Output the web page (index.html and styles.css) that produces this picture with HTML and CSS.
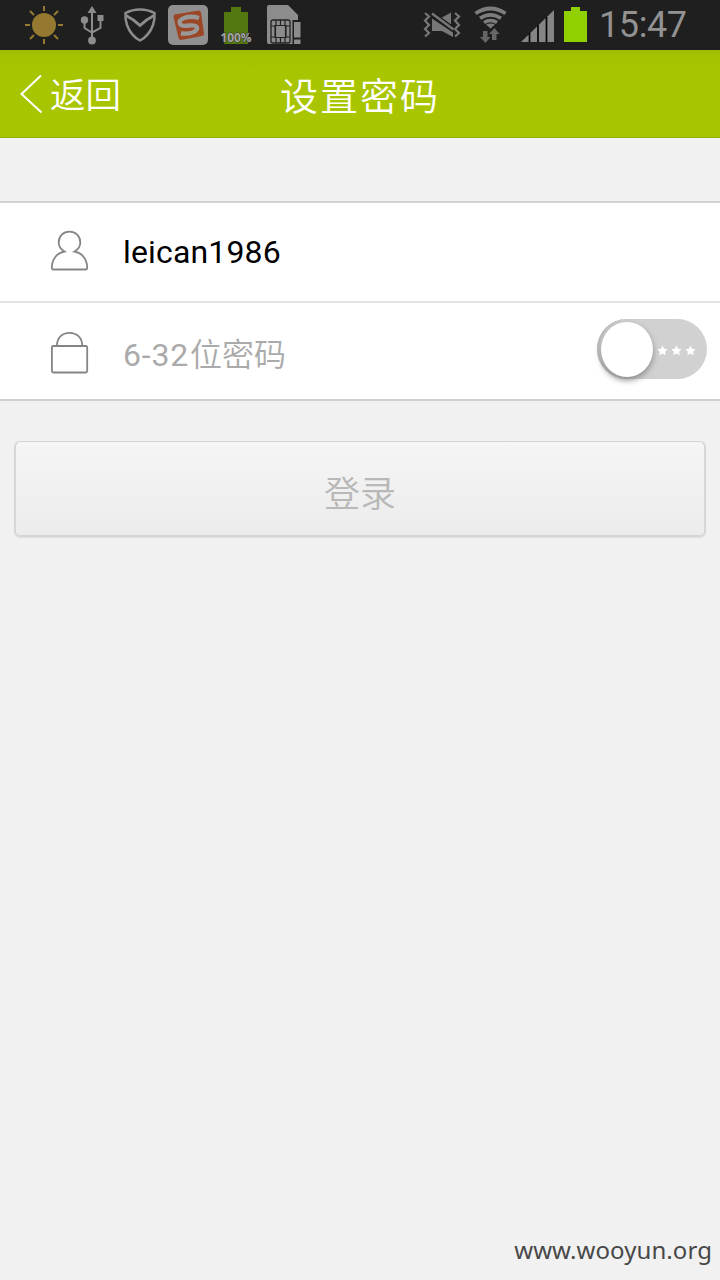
FILE: index.html
```html
<!DOCTYPE html>
<html lang="zh-CN">
<head>
<meta charset="utf-8">
<title>设置密码</title>
<link rel="stylesheet" href="styles.css">
</head>
<body>
<div class="screen">
  <div class="status-bar">
    <div class="notifications">
      <svg width="40" height="50" viewBox="24 0 40 50"><circle cx="44" cy="25" r="12" fill="#957931"/><path d="M44 6v5M44 39v5M25 25h5M58 25h5M30 11l4 4M54 35l4 4M58 11l-4 4M34 35l-4 4" stroke="#957931" stroke-width="2"/></svg>
      <svg width="26" height="50" viewBox="80 0 26 50" fill="#8c8c8c"><path d="M92 6l4.500 7h-9zM97.500 15h6v6h-6z"/><circle cx="84.500" cy="20" r="3.700"/><circle cx="92" cy="40.500" r="3.900"/><path d="M92 11v28M84.500 22v6l7.500 4.500 8.500-4.500v-9" fill="none" stroke="#8c8c8c" stroke-width="2"/></svg>
      <svg width="36" height="50" viewBox="122 0 36 50" fill="none" stroke="#8c8c8c"><path d="M140 9.500q8 0 14.500 3.500.5 6-1.500 12-4 11-13 15.500-9-4.500-13-15.500-2-6-1.500-12 6.500-3.500 14.500-3.500z" stroke-width="2.500"/><path d="M126 15.500q7 3.500 14 10 7-6.500 14-10" stroke-width="3"/></svg>
      <svg width="40" height="50" viewBox="168 0 40 50"><rect x="168" y="5" width="40" height="40" rx="5" fill="#909090"/><path d="M174.500 14.500l24-4q2 0 2.500 2l3 21q0 2-2 2.500l-21 4q-2 0-2.500-2l-5-21q0-2 1-2.500z" fill="#9b4727"/><path d="M199 18q-8-2.500-15 0-6 2.500-4 6 1.500 2.500 9 1.500 9-1 8 3.500-3 5.500-16 4.500" fill="none" stroke="#999" stroke-width="4.300"/></svg>
      <svg width="34" height="50" viewBox="219 0 34 50"><path d="M224 12h7V7h10v5h7v32h-24z" fill="#55770f"/><text class="battery-level" x="220.500" y="42" textLength="31" lengthAdjust="spacingAndGlyphs">100%</text></svg>
      <svg width="36" height="50" viewBox="267 0 36 50"><path d="M269 5h19l10 10v29h-29q-2 0-2-2V7q0-2 2-2z" fill="#8c8c8c"/><rect x="271" y="20" width="19" height="23" rx="2" fill="#8c8c8c" stroke="#222" stroke-width="1.300"/><path d="M276 20v5M280.500 20v5M285 20v5M276 38v5M280.500 38v5M285 38v5M271 26h4.500v11H271M290 26h-4.500v11H290M275 25.500h11v12h-11z" fill="none" stroke="#222" stroke-width="1.200"/><path d="M292.500 20h10.500v25h-10.500z" fill="#1f1f1f"/><path d="M294 22h6.500v15.500H294zM294 39.500h6.500v4.500H294z" fill="#8c8c8c"/></svg>
    </div>
    <div class="system">
      <svg width="38" height="50" viewBox="423 0 38 50"><path d="M425 13l4 3.500-4 4 4 4.500-4 4 4 4-4 3.500M455 13l4 3.500-4 4 4 4.500-4 4 4 4-4 3.500" fill="none" stroke="#777" stroke-width="2.200"/><path d="M432 18.500l21 14v4.500l-11-6h-10zM441 18l10-5.500v12z" fill="#777"/><path d="M432 13.500l21.500 16" stroke="#1f1f1f" stroke-width="5"/><path d="M432 13.500l21.500 16" stroke="#777" stroke-width="2.400"/></svg>
      <svg width="34" height="50" viewBox="474 0 34 50"><g fill="none" stroke="#7c7c7c" stroke-width="3.700"><path d="M475.500 13.500q15-10 30 0M480 18.300q10.500-7 21 0M484 22.500q6.500-4 13 0"/></g><path d="M486 24.500q4.500-2 9 0l-4.500 4z" fill="#7c7c7c"/><path d="M483 31h4.500v6h3l-5 6-5.500-6h3zM492 40h4.500v-6h3l-5-6-5.500 6h3z" fill="#666"/></svg>
      <svg width="34" height="50" viewBox="521 0 34 50"><path d="M521 42l33-32v32z" fill="#858585"/><path d="M529.500 33v9M538 25v17M546.500 17v25" stroke="#050505" stroke-width="1.700"/></svg>
      <svg width="23" height="50" viewBox="564 0 23 50"><path d="M564 11h7V7h9v4h7v31h-23z" fill="#91d000"/></svg>
      <span class="clock">15:47</span>
    </div>
  </div>
  <header class="title-bar">
    <a class="back"><svg width="24" height="40" viewBox="20 74 24 40"><path d="M41 75.500L21.500 94 41.500 112.500" fill="none" stroke="#fff" stroke-width="2"/></svg><span class="back-label">返回</span></a>
    <h1 class="title">设置密码</h1>
  </header>
  <main>
    <div class="form">
      <div class="field account">
        <svg width="40" height="44" viewBox="50 229 40 44" fill="none" stroke="#858585" stroke-width="1.800"><path d="M64.500 251.500C60 249 58.700 246 58.700 242.500C58.700 236 63.500 231.700 69.500 231.700S80.300 236 80.300 242.500C80.300 246 79 249 74.500 251.500C82 253 87.200 259 87.200 268Q87.200 269.500 85.500 269.500H53.500Q51.800 269.500 51.800 268C51.800 259 57 253 64.500 251.500z"/></svg>
        <span class="account-name">leican1986</span>
      </div>
      <div class="field password">
        <svg width="40" height="44" viewBox="50 331 40 44" fill="none" stroke="#858585" stroke-width="1.800"><rect x="51.900" y="346" width="35.300" height="26.500" rx="1.500"/><path d="M56.900 346C57 337.500 62.500 332.800 69.500 332.800S82.200 337.500 82.300 346"/></svg>
        <span class="hint"><span class="hint-range">6-32</span><span class="hint-cjk">位密码</span></span>
        <span class="toggle"><span class="knob"></span><svg class="stars" width="40" height="12" viewBox="657 345 40 12" fill="#fff"><path id="star" d="M662.500 345.500l1.600 3.200 3.500.5-2.500 2.500.6 3.500-3.200-1.700-3.200 1.700.6-3.500-2.500-2.500 3.500-.5z"/><use href="#star" x="14"/><use href="#star" x="28"/></svg></span>
      </div>
    </div>
    <div class="login">登录</div>
  </main>
  <footer class="watermark">www.wooyun.org</footer>
</div>
</body>
</html>
```
FILE: styles.css
```css
* { box-sizing: border-box; }
body { margin: 0; font-family: Roboto, "Noto Sans CJK SC", sans-serif; }
svg { display: block; flex: none; }
.screen { width: 720px; height: 1280px; background: #f1f1f1; display: flex; flex-direction: column; overflow: hidden; }
.status-bar { height: 50px; background: #1f1f1f; display: flex; justify-content: space-between; padding: 0 33px 0 24px; }
.notifications { display: flex; }
.notifications svg:nth-child(2) { margin-left: 16px; }
.notifications svg:nth-child(3) { margin-left: 16px; }
.notifications svg:nth-child(4) { margin-left: 10px; }
.notifications svg:nth-child(5) { margin-left: 11px; }
.notifications svg:nth-child(6) { margin-left: 14px; }
.battery-level { font: bold 12px "Open Sans", sans-serif; fill: #a4a4a4; stroke: #333; stroke-width: 1px; paint-order: stroke; }
.system { display: flex; }
.system svg:nth-child(2) { margin-left: 13px; }
.system svg:nth-child(3) { margin-left: 13px; }
.system svg:nth-child(4) { margin-left: 9px; }
.clock { width: 88px; margin-left: 12px; font-size: 36px; line-height: 50px; font-weight: 400; letter-spacing: -.4px; color: #929292; white-space: nowrap; }
.title-bar { height: 88px; background: linear-gradient(#9fbb00, #a5c200 5px, #a8c500 24px); border-bottom: 1px solid #94ad08; display: grid; grid-template-columns: 200px 320px 200px; align-items: center; color: #fff; }
.back { display: flex; align-items: center; padding-left: 20px; }
.back-label { margin: 0 0 1px 6px; font: 350 35.5px/50px "Noto Sans CJK SC", "Noto Sans CJK SC DemiLight", sans-serif; }
.title { margin: 0; text-align: center; font: 350 38px/50px "Noto Sans CJK SC", "Noto Sans CJK SC DemiLight", sans-serif; letter-spacing: 2px; }
.form { margin-top: 63px; height: 200px; background: #fff; border-top: 2px solid #d2d2d2; border-bottom: 2px solid #cfcfcf; }
.field { display: flex; align-items: center; padding-left: 50px; }
.account { height: 100px; border-bottom: 2px solid #e4e4e4; }
.account svg { margin-bottom: 2px; }
.account-name { margin-left: 33px; font-size: 32px; letter-spacing: .15px; color: #000; }
.password { height: 96px; padding-right: 13px; }
.password > svg { margin-top: 4px; }
.hint { margin: 2px 0 0 33px; flex: 1; display: flex; align-items: baseline; color: #aaa; }
.hint-range { font-size: 32px; letter-spacing: .8px; }
.hint-cjk { margin-left: 1px; font: 350 32px/48px "Noto Sans CJK SC", "Noto Sans CJK SC DemiLight", sans-serif; }
.toggle { width: 110px; height: 60px; margin-bottom: 4px; border-radius: 30px; background: #d1d1d1; display: flex; align-items: center; padding-left: 4px; box-shadow: inset 2px 0 1px #bbb; }
.knob { width: 52px; height: 55px; border-radius: 50%; background: #fff; box-shadow: 0 3px 6px #888; }
.stars { margin: 3px 0 0 4px; }
.login { margin: 40px 14px 0; height: 96px; border: 2px solid #d5d5d5; border-top-width: 1px; border-radius: 6px; background: linear-gradient(#f5f5f5, #ececec); box-shadow: 0 1px 1px #ddd; text-align: center; font: 350 36px/99px "Noto Sans CJK SC", "Noto Sans CJK SC DemiLight", sans-serif; color: #b8b8b8; }
.watermark { margin-top: auto; padding: 0 8px 13px; text-align: right; font: 24px/34px "Noto Sans", sans-serif; letter-spacing: .07px; color: #484848; }
```
